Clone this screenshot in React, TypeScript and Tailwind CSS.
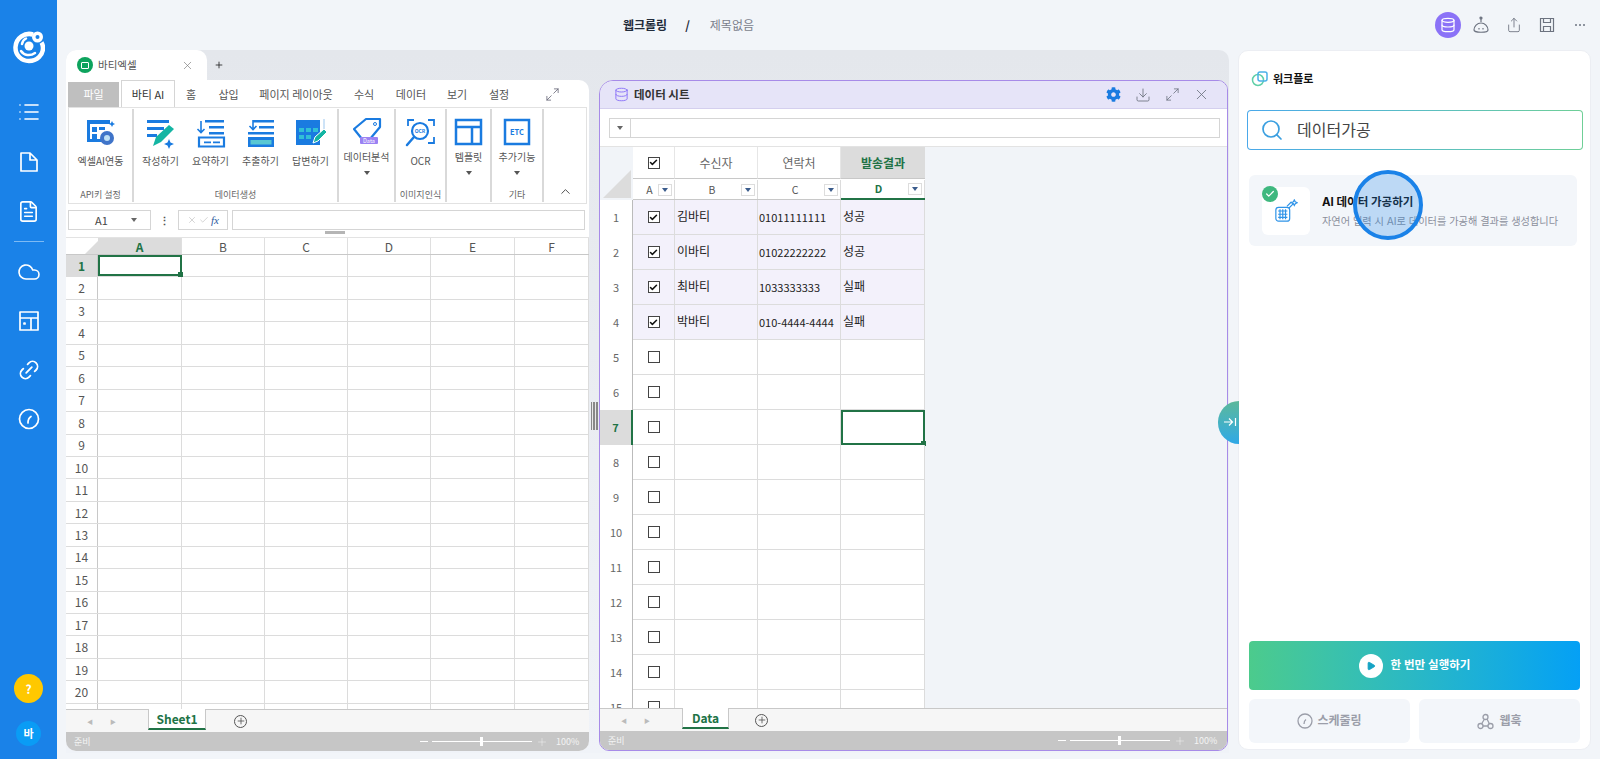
import { Check, ChevronUp, Cloud, Database, Download, FileText, Link2, List, Maximize2, Play, Plus, Search, Share, X } from 'lucide-react';
import { FaCog } from 'react-icons/fa';

const FONT = "font-['Noto_Sans_CJK_KR','Noto_Sans',sans-serif]";
const EXCEL_COLS = ['A', 'B', 'C', 'D', 'E', 'F'];
const EXCEL_W = ['w-[84px]', 'w-[83px]', 'w-[83px]', 'w-[83px]', 'w-[84px]', 'flex-1'];
const EXCEL_ROWS = Array.from({ length: 21 }, (_, i) => i + 1);
const DATA_ROWS = Array.from({ length: 15 }, (_, i) => i + 1);
const PEOPLE = [
  ['김바티', '01011111111', '성공'],
  ['이바티', '01022222222', '성공'],
  ['최바티', '1033333333', '실패'],
  ['박바티', '010-4444-4444', '실패'],
];
const TABS = [
  ['홈', 'w-[32px]'],
  ['삽입', 'w-[43px]'],
  ['페이지 레이아웃', 'w-[92px]'],
  ['수식', 'w-[44px]'],
  ['데이터', 'w-[50px]'],
  ['보기', 'w-[42px]'],
  ['설정', 'w-[42px]'],
];

const Logo = () => (
  <svg width="32" height="34" viewBox="0 0 32 34" fill="none">
    <path d="M20 4.500C12 2 3 8 2.500 17c-.4 8 6 14 13.500 14 8 0 14-6 14-13 0-2-.5-4-1.500-5.500" stroke="#fff" strokeWidth="4.500" />
    <circle cx="24.500" cy="7" r="5.500" fill="#fff" />
    <circle cx="24.500" cy="7" r="2" fill="#1a82e8" />
    <circle cx="16" cy="16" r="4.500" fill="#fff" />
    <path d="M8 21c3 4.500 9 5.500 14 2" stroke="#fff" strokeWidth="2.500" strokeLinecap="round" />
    <path d="M9 14c.5-2.500 2-4.500 4-5.500" stroke="#fff" strokeWidth="2.500" strokeLinecap="round" />
  </svg>
);

const NavIcon: React.FC<{ children: React.ReactNode }> = ({ children }) => (
  <svg width="22" height="22" viewBox="0 0 22 22" fill="none" stroke="#fff" strokeWidth="1.700" strokeLinejoin="round" strokeLinecap="round">
    {children}
  </svg>
);

const Sidebar = () => (
  <aside className="flex w-[57px] shrink-0 flex-col items-center bg-[#1a82e8] text-white">
    <div className="mt-[30px] flex h-[34px] items-center">
      <Logo />
    </div>
    <div className="mt-[37px] flex h-[22px] items-center">
      <List size={24} strokeWidth={1.600} />
    </div>
    <div className="mt-[28px] flex h-[22px] items-center">
      <NavIcon>
        <path d="M3 2h9l7 7v11H3z M12 2v7h7" />
      </NavIcon>
    </div>
    <div className="mt-[27px] flex h-[22px] items-center">
      <FileText size={23} strokeWidth={1.700} />
    </div>
    <div className="mt-[19px] h-px w-[30px] bg-[#7dbaf4]" />
    <div className="mt-[19px] flex h-[22px] items-center">
      <Cloud size={24} strokeWidth={1.600} />
    </div>
    <div className="mt-[27px] flex h-[22px] items-center">
      <NavIcon>
        <path d="M2 2h18v18H2z M2 8h18 M13 8v12" />
        <path d="M6 13h1v1H6z" />
      </NavIcon>
    </div>
    <div className="mt-[27px] flex h-[22px] items-center">
      <Link2 size={24} strokeWidth={1.800} className="-rotate-45" />
    </div>
    <div className="mt-[27px] flex h-[22px] items-center">
      <NavIcon>
        <circle cx="11" cy="11" r="9.500" />
        <path d="M10 15c0-3 .5-5 3-6.500" />
      </NavIcon>
    </div>
    <div className="mt-auto flex h-[29px] w-[29px] items-center justify-center rounded-full bg-[#ffc800] text-[12px] font-bold">?</div>
    <div className="mb-[13px] mt-[18px] flex h-[25px] w-[25px] items-center justify-center rounded-full bg-[#0a9cf5] text-[11px] font-bold">바</div>
  </aside>
);

const TopBar = () => (
  <header className="relative flex h-[50px] items-center pl-[566px] text-[12px]">
    <span className="font-bold text-[#222b3a]">웹크롤링</span>
    <span className="ml-[18px] font-bold text-[#222b3a]">/</span>
    <span className="ml-[20px] text-[#7b7f8c]">제목없음</span>
    <div className="ml-auto mr-[7px] flex items-center">
      <div className="flex h-[26px] w-[26px] items-center justify-center rounded-full bg-[#8b72f7]">
        <Database size={16} color="#fff" strokeWidth={1.800} />
      </div>
      <div className="flex w-[40px] justify-center">
        <svg width="18" height="20" viewBox="0 0 18 20" fill="none" stroke="#6d7380" strokeWidth="1.200">
          <circle cx="9" cy="3" r="1" fill="#6d7380" />
          <path d="M9 4v3" />
          <path d="M2 15a7 7 0 0 1 14 0c0 3-14 3-14 0z" />
          <path d="M7 13v1.500M11 13v1.500" />
        </svg>
      </div>
      <div className="flex w-[26px] justify-center">
        <Share size={16} color="#6d7380" strokeWidth={1.300} />
      </div>
      <div className="flex w-[40px] justify-center">
        <svg width="16" height="16" viewBox="0 0 16 16" fill="none" stroke="#6d7380" strokeWidth="1.200">
          <path d="M1.500 1.500h13v13h-13z" />
          <path d="M4.500 1.500v4h7v-4M4.500 14.500v-5h7v5" />
        </svg>
      </div>
      <div className="flex w-[26px] justify-center gap-[2px]">
        <span className="h-[2px] w-[2px] rounded-full bg-[#6d7380]" />
        <span className="h-[2px] w-[2px] rounded-full bg-[#6d7380]" />
        <span className="h-[2px] w-[2px] rounded-full bg-[#6d7380]" />
      </div>
    </div>
  </header>
);

const RibbonIcon: React.FC<{ kind: string }> = ({ kind }) => {
  const blue = '#1a7be0';
  if (kind === 'link')
    return (
      <svg width="32" height="32" viewBox="0 0 32 32" fill="none">
        <path d="M2 3h23v4H2zM2 7h3v18H2zM7 10h5v5H7zM7 17h5v5H7z M14 10h6v3h-6z" fill={blue} />
        <path d="M5 22h13v3H5z" fill={blue} />
        <circle cx="22" cy="21" r="7" fill="#3f74c9" />
        <circle cx="22" cy="21" r="3" fill="#bfe0f5" />
        <path d="M27 4l1 2 2 1-2 1-1 2-1-2-2-1 2-1z" fill={blue} />
      </svg>
    );
  if (kind === 'write')
    return (
      <svg width="32" height="32" viewBox="0 0 32 32" fill="none">
        <path d="M2 3h22v3H2zM2 10h17v3H2zM2 17h10v3H2z" fill={blue} />
        <path d="M8 29l3-9L24 8l5 4-13 13z" fill="#14b5a3" />
        <path d="M24 22l1.500 3.500L29 27l-3.500 1.500L24 32l-1.500-3.500L19 27l3.500-1.500z" fill={blue} />
      </svg>
    );
  if (kind === 'sum')
    return (
      <svg width="32" height="32" viewBox="0 0 32 32" fill="none">
        <path d="M10 3h19v2.500H10zM14 9h15v2.500H14zM14 15h15v2.500H14z" fill={blue} />
        <path d="M6 4v11M2.500 12L6 15.500 9.500 12" stroke={blue} strokeWidth="1.600" />
        <path d="M4 20.500h25v9H4z" stroke={blue} strokeWidth="2.200" />
        <path d="M9 24.500h7v1.800H9zM18 24.500h7v1.800h-7z" fill={blue} />
      </svg>
    );
  if (kind === 'extract')
    return (
      <svg width="32" height="32" viewBox="0 0 32 32" fill="none">
        <path d="M8 3h21v2.500H8zM14 9h15v2.500H14zM3 15h26v2.500H3z" fill={blue} />
        <path d="M8 3v9M4.500 9L8 12.500 11.500 9" stroke={blue} strokeWidth="1.600" />
        <path d="M3 20h26v10H3z" fill={blue} />
        <path d="M5.500 23h21v4.500h-21z" fill="#58c7d3" />
      </svg>
    );
  if (kind === 'answer')
    return (
      <svg width="32" height="32" viewBox="0 0 32 32" fill="none">
        <path d="M1 3h24v5H1zM1 8h24v20H1z" fill={blue} />
        <path d="M4 11h5v4H4zM11 11h5v4h-5zM18 11h5v4h-5zM4 18h5v4H4zM11 18h5v4h-5z" fill="#31c0d6" />
        <path d="M29 2v14" stroke="#9cc7ef" />
        <path d="M18 26l2-6 9-8 3 3-9 9z" fill="#14b5a3" stroke="#fff" />
      </svg>
    );
  if (kind === 'tag')
    return (
      <svg width="32" height="32" viewBox="0 0 32 32" fill="none">
        <path d="M3 12L15 2h14v8L19 22H11z" stroke={blue} strokeWidth="2.200" strokeLinejoin="round" />
        <circle cx="24" cy="7" r="1.500" stroke={blue} />
        <rect x="9" y="20" width="18" height="7" rx="1" fill="#9b82f3" />
        <text x="18" y="26" fontSize="5.500" fill="#fff" textAnchor="middle">Data</text>
      </svg>
    );
  if (kind === 'ocr')
    return (
      <svg width="32" height="32" viewBox="0 0 32 32" fill="none" stroke={blue}>
        <path d="M3 9V3h6M23 3h6v6M29 20v6h-6" strokeWidth="1.800" />
        <circle cx="15" cy="14" r="8" strokeWidth="2.200" />
        <path d="M9 20l-7 8" strokeWidth="2.500" strokeLinecap="round" />
        <text x="15" y="16" fontSize="5" fill={blue} stroke="none" fontWeight="700" textAnchor="middle">OCR</text>
      </svg>
    );
  if (kind === 'layout')
    return (
      <svg width="32" height="32" viewBox="0 0 32 32" fill="none" stroke={blue} strokeWidth="2.500">
        <path d="M3 3h25v24H3zM3 10h25M19 10v17" />
      </svg>
    );
  return (
    <svg width="32" height="32" viewBox="0 0 32 32" fill="none" stroke={blue} strokeWidth="2.500">
      <path d="M4 3h24v24H4z" />
      <text x="16" y="18" fontSize="7.500" fontWeight="700" fill={blue} stroke="none" textAnchor="middle">ETC</text>
    </svg>
  );
};

const RibbonItem: React.FC<{ kind: string; label: string; arrow?: boolean; w?: string }> = ({ kind, label, arrow, w = 'w-[50px]' }) => (
  <div className={`flex ${w} flex-col items-center pt-[8px]`}>
    <div className="flex h-[32px] items-center justify-center">
      <RibbonIcon kind={kind} />
    </div>
    <div className={`whitespace-nowrap text-[10px] leading-[14px] text-[#555] ${arrow ? 'mt-[1px]' : 'mt-[5px]'}`}>{label}</div>
    {arrow && <div className="mt-[7px] h-0 w-0 border-x-[3px] border-t-[4px] border-x-transparent border-t-[#555]" />}
  </div>
);

const RibbonGroup: React.FC<{ label?: string; w: string; children: React.ReactNode }> = ({ label, w, children }) => (
  <div className={`flex ${w} shrink-0 flex-col border-r-2 border-[#d9d9d9]`}>
    <div className="flex flex-1 justify-center">{children}</div>
    <div className="h-[14px] text-center text-[9px] leading-[14px] text-[#666]">{label}</div>
  </div>
);

const ExcelPanel = () => (
  <section className="flex min-h-0 w-[523px] shrink-0 flex-col overflow-hidden rounded-b-[10px] rounded-tr-[10px] bg-white">
    <div className="flex h-[27px] shrink-0 items-end pl-[2px] text-[11px] text-[#555]">
      <div className="flex h-[25px] w-[51px] items-center justify-center bg-[#bfbfbf] text-white">파일</div>
      <div className="ml-[2px] flex h-[27px] w-[54px] items-center justify-center border-x border-t border-[#d5d5d5] text-[#333]">바티 AI</div>
      {TABS.map(([t, w]) => (
        <div key={t} className={`flex h-[25px] ${w} items-center justify-center`}>
          {t}
        </div>
      ))}
      <div className="ml-[25px] flex h-[25px] items-center text-[#667]">
        <Maximize2 size={15} strokeWidth={1.300} />
      </div>
    </div>
    <div className="mx-[2px] flex h-[97px] shrink-0 border border-[#e2e2e2] py-[1px]">
      <RibbonGroup w="w-[65px]" label="API키 설정">
        <RibbonItem kind="link" label="엑셀AI연동" w="w-[64px]" />
      </RibbonGroup>
      <RibbonGroup w="w-[205px]" label="데이터생성">
        <RibbonItem kind="write" label="작성하기" />
        <RibbonItem kind="sum" label="요약하기" />
        <RibbonItem kind="extract" label="추출하기" />
        <RibbonItem kind="answer" label="답변하기" />
      </RibbonGroup>
      <RibbonGroup w="w-[57px]">
        <RibbonItem kind="tag" label="데이터분석" arrow />
      </RibbonGroup>
      <RibbonGroup w="w-[51px]" label="이미지인식">
        <RibbonItem kind="ocr" label="OCR" />
      </RibbonGroup>
      <RibbonGroup w="w-[45px]">
        <RibbonItem kind="layout" label="템플릿" arrow />
      </RibbonGroup>
      <RibbonGroup w="w-[52px]" label="기타">
        <RibbonItem kind="etc" label="추가기능" arrow />
      </RibbonGroup>
      <div className="flex flex-1 items-end justify-center pb-[3px] text-[#444]">
        <ChevronUp size={15} strokeWidth={1.500} />
      </div>
    </div>
    <div className="flex h-[26px] shrink-0 items-start pl-[2px] pr-[4px] pt-[6px] text-[11px] text-[#444]">
      <div className="flex h-[20px] w-[83px] items-center border border-[#d5d5d5] pl-[26px]">
        A1
        <span className="ml-[23px] h-0 w-0 border-x-[3px] border-t-[4px] border-x-transparent border-t-[#666]" />
      </div>
      <div className="flex h-[20px] w-[27px] items-center justify-center font-bold leading-none text-[#555]">⋮</div>
      <div className="flex h-[20px] w-[50px] items-center justify-center gap-[2px] border border-[#d5d5d5] text-[#ccc]">
        <X size={10} />
        <Check size={10} />
        <span className="font-['Liberation_Serif',serif] italic text-[#2c5a9e]">fx</span>
      </div>
      <div className="ml-[4px] h-[20px] flex-1 border border-[#d5d5d5]" />
    </div>
    <div className="flex h-[7px] shrink-0 justify-center pt-[1px]">
      <div className="ml-[14px] h-[3px] w-[20px] bg-[#b5b5b5]" />
    </div>
    <div className="min-h-0 flex-1 overflow-hidden border-t border-[#e3e3e3]">
      <div className="flex h-[17px] border-b border-[#c8c8c8] text-[12px] leading-[17px] text-[#555]">
        <div className="flex w-[32px] items-end justify-end">
          <div className="h-0 w-0 border-b-[13px] border-l-[13px] border-b-[#dcdcdc] border-l-transparent" />
        </div>
        {EXCEL_COLS.map((c, i) => (
          <div key={c} className={`${EXCEL_W[i]} border-r border-[#dfdfdf] text-center ${i === 0 ? 'bg-[#dcdcdc] font-bold text-[#217346]' : ''}`}>
            {c}
          </div>
        ))}
      </div>
      {EXCEL_ROWS.map((r) => (
        <div key={r} className="flex h-[22.450px] border-b border-[#dcdcdc] text-[12px]">
          <div className={`flex w-[32px] items-center justify-center border-r border-[#c8c8c8] ${r === 1 ? 'bg-[#dcdcdc] font-bold text-[#217346]' : 'text-[#555]'}`}>{r < 21 ? r : ''}</div>
          {EXCEL_COLS.map((c, i) => {
            const sel = r === 1 && i === 0;
            return (
              <div key={c} className={`relative ${EXCEL_W[i]} ${sel ? 'border-2 border-[#217346]' : 'border-r border-[#dcdcdc]'}`}>
                {sel && <span className="absolute -bottom-[3px] -right-[3px] h-[5px] w-[5px] bg-[#217346]" />}
              </div>
            );
          })}
        </div>
      ))}
    </div>
    <SheetTabs name="Sheet1" tab="ml-[32px] w-[58px]" plus="ml-[28px]" />
    <StatusBar gap="ml-[326px]" />
  </section>
);

const SheetTabs: React.FC<{ name: string; tab: string; plus: string }> = ({ name, tab, plus }) => (
  <div className="flex h-[23px] shrink-0 border-t border-[#c8c8c8] bg-[#f6f6f6]">
    <div className="ml-[21px] flex h-[22px] items-center gap-[17px] text-[6px] text-[#bbb]">
      <span>◀</span>
      <span>▶</span>
    </div>
    <div className={`${tab} -mt-px flex h-[21px] items-center justify-center border-x border-[#c8c8c8] border-b-2 border-b-[#217346] bg-white text-[12px] font-bold text-[#217346]`}>{name}</div>
    <div className={`${plus} flex h-[22px] items-center`}>
      <div className="flex h-[13px] w-[13px] items-center justify-center rounded-full border border-[#555]">
        <Plus size={10} color="#555" strokeWidth={2} />
      </div>
    </div>
  </div>
);

const StatusBar: React.FC<{ gap: string }> = ({ gap }) => (
  <div className="flex h-[19px] shrink-0 items-center bg-[#c6c6c6] pl-[8px] text-[9px] text-white/80">
    <span className="w-[20px]">준비</span>
    <span className={`${gap} h-px w-[8px] bg-white`} />
    <div className="relative ml-[4px] h-px w-[100px] bg-white">
      <span className="absolute left-[48px] top-[-4px] h-[9px] w-[3px] bg-white" />
    </div>
    <Plus size={12} className="ml-[4px]" strokeWidth={1} />
    <span className="ml-[8px]">100%</span>
  </div>
);

const Checkbox: React.FC<{ on?: boolean }> = ({ on }) => (
  <span className="flex h-[12px] w-[12px] items-center justify-center border-[1.500px] border-[#444] bg-white">
    {on && <Check size={9} color="#111" strokeWidth={4} />}
  </span>
);

const LetterCell: React.FC<{ c: string; w: string; active?: boolean }> = ({ c, w, active }) => (
  <div className={`flex ${w} items-center border-r border-[#dcdcdc] pl-[8px] pr-[2px] text-[10.500px] ${active ? 'font-bold text-[#217346]' : 'text-[#555]'}`}>
    <span className="flex-1 text-center">{c}</span>
    <span className="flex h-[12px] w-[14px] items-center justify-center border border-[#ddd] bg-white">
      <span className="h-0 w-0 border-x-[3px] border-t-[4px] border-x-transparent border-t-[#3b5c8c]" />
    </span>
  </div>
);

const DataGrid = () => (
  <div className="min-h-0 flex-1 overflow-hidden">
    <div className="flex h-[32px]">
      <div className="w-[33px] bg-transparent" />
      <div className="flex w-[42px] items-center justify-center border-b border-r border-[#c8c8c8] border-r-[#e6e6e6] bg-white">
        <Checkbox on />
      </div>
      {['수신자', '연락처'].map((t) => (
        <div key={t} className="flex w-[83px] items-center justify-center border-b border-r border-[#c8c8c8] border-r-[#e6e6e6] bg-white text-[12px] text-[#666]">
          {t}
        </div>
      ))}
      <div className="flex w-[84px] items-center justify-center border-b border-[#c8c8c8] bg-[#dcdcdc] text-[12px] font-bold text-[#217346]">발송결과</div>
    </div>
    <div className="flex h-[21px]">
      <div className="flex w-[33px] items-end justify-end pb-[2px] pr-[2px]">
        <div className="-mt-[20px] h-0 w-0 border-b-[28px] border-l-[28px] border-t-0 border-b-[#dcdcdc] border-l-transparent" />
      </div>
      <div className="flex border-b border-[#c8c8c8] bg-white pt-[1px]">
        <LetterCell c="A" w="w-[42px]" />
        <LetterCell c="B" w="w-[83px]" />
        <LetterCell c="C" w="w-[83px]" />
      </div>
      <div className="flex border-b-2 border-[#217346] bg-white pt-[1px]">
        <LetterCell c="D" w="w-[84px]" active />
      </div>
    </div>
    {DATA_ROWS.map((r) => {
      const p = PEOPLE[r - 1];
      const selected = r === 7;
      const bg = p ? 'bg-[#f3f1fb]' : 'bg-white';
      return (
        <div key={r} className="flex h-[35px]">
          <div className={`flex w-[33px] items-center justify-center text-[11px] ${selected ? 'border-r-2 border-[#217346] bg-[#dcdcdc] font-bold text-[#217346]' : 'border-r border-[#bbb] bg-white text-[#666]'}`}>{r}</div>
          <div className={`flex w-[42px] items-center justify-center border-b border-r border-[#dcdcdc] ${bg}`}>
            <Checkbox on={!!p} />
          </div>
          <div className={`flex w-[83px] items-center border-b border-r border-[#dcdcdc] pb-[2px] pl-[2px] text-[12px] text-[#222] ${bg}`}>{p?.[0]}</div>
          <div className={`flex w-[83px] items-center border-b border-r border-[#dcdcdc] pl-[1px] pt-[1px] text-[11px] text-[#222] ${bg}`}>{p?.[1]}</div>
          <div className={`relative flex w-[84px] items-center pb-[2px] pl-[2px] text-[12px] text-[#222] ${bg} ${selected ? 'border-2 border-[#217346]' : 'border-b border-r border-[#dcdcdc]'}`}>
            {p?.[2]}
            {selected && <span className="absolute -bottom-[3px] -right-[3px] h-[5px] w-[5px] bg-[#217346]" />}
          </div>
        </div>
      );
    })}
  </div>
);

const DataPanel = () => (
  <section className="flex min-h-0 w-[629px] shrink-0 flex-col overflow-hidden rounded-[10px] rounded-tl-[14px] border border-[#a78be8] bg-[#f1f4f8]">
    <div className="flex h-[28px] shrink-0 items-center border-b border-[#d4cfee] bg-[#e6e4f8] pl-[14px] pr-[17px] text-[#333]">
      <Database size={15} color="#8b72f7" strokeWidth={1.500} />
      <span className="ml-[5px] text-[11.500px] font-bold">데이터 시트</span>
      <FaCog size={15} color="#1a7be0" className="ml-auto" />
      <Download size={16} color="#6d7380" strokeWidth={1.300} className="ml-[14px]" />
      <Maximize2 size={15} color="#6d7380" strokeWidth={1.300} className="ml-[14px]" />
      <X size={17} color="#6d7380" strokeWidth={1.200} className="ml-[13px]" />
    </div>
    <div className="flex h-[38px] shrink-0 items-center border-b border-[#e3e3e3] bg-white pl-[9px] pr-[7px]">
      <div className="flex h-[20px] w-[22px] items-center justify-center border border-[#d5d5d5]">
        <span className="h-0 w-0 border-x-[3px] border-t-[4px] border-x-transparent border-t-[#666]" />
      </div>
      <div className="h-[20px] flex-1 border border-l-0 border-[#d5d5d5]" />
    </div>
    <DataGrid />
    <SheetTabs name="Data" tab="ml-[32px] w-[47px]" plus="ml-[26px]" />
    <StatusBar gap="ml-[430px]" />
  </section>
);

const Workspace = () => (
  <div className="ml-[9px] flex h-[703px] w-[1163px] shrink-0 flex-col rounded-t-[10px] bg-gradient-to-b from-[#e4e7ec] to-[#f0f3f8]">
    <div className="flex h-[30px] shrink-0 items-center">
      <div className="flex h-[30px] w-[141px] items-center rounded-t-[10px] bg-white pl-[11px] pr-[13px] text-[10.500px] text-[#555]">
        <span className="flex h-[16px] w-[16px] items-center justify-center rounded-full bg-[#0da35d]">
          <span className="h-[7px] w-[8px] rounded-[1px] border border-white" />
        </span>
        <span className="ml-[5px]">바티엑셀</span>
        <X size={13} strokeWidth={1.200} className="ml-auto text-[#777]" />
      </div>
      <Plus size={10} strokeWidth={2} className="ml-[7px] text-[#222]" />
    </div>
    <div className="flex min-h-0 flex-1 pb-[2px]">
      <ExcelPanel />
      <div className="flex w-[10px] shrink-0 items-center justify-center">
        <div className="flex h-[28px] w-[7px] justify-between bg-[#e8e8e8]">
          <span className="w-[1.500px] bg-[#888]" />
          <span className="w-[1.500px] bg-[#888]" />
          <span className="w-[1.500px] bg-[#888]" />
        </div>
      </div>
      <DataPanel />
    </div>
  </div>
);

const WorkflowPanel = () => (
  <aside className="relative ml-[9px] flex h-[700px] w-[353px] shrink-0 flex-col rounded-[10px] border border-[#eceef3] bg-white font-['Inter','Noto_Sans_CJK_KR',sans-serif]">
    <div className="mt-[18px] flex h-[20px] items-center pl-[12px] text-[11px] font-bold text-[#111]">
      <svg width="18" height="18" viewBox="0 0 18 18" fill="none" strokeWidth="1.500">
        <circle cx="7" cy="10" r="5.500" stroke="#5fcfa8" />
        <rect x="7" y="2" width="9" height="9" rx="2" stroke="#4bb1e8" />
      </svg>
      <span className="ml-[4px]">워크플로</span>
    </div>
    <div className="ml-[8px] mt-[21px] w-[336px] rounded-[4px] bg-gradient-to-r from-[#4aa8ea] to-[#6fcf97] p-px">
      <div className="flex h-[38px] items-center rounded-[3px] bg-white pl-[12px] text-[16px] text-[#444]">
        <Search size={24} color="#3a9fe0" strokeWidth={1.700} />
        <span className="ml-[13px]">데이터가공</span>
      </div>
    </div>
    <div className="ml-[10px] mt-[25px] flex h-[71px] w-[328px] items-center rounded-[6px] bg-[#f3f6fa] pl-[13px]">
      <div className="relative flex h-[48px] w-[48px] items-center justify-center rounded-[6px] bg-white">
        <svg width="24" height="24" viewBox="0 0 26 26" fill="none" stroke="#2f94e8" strokeWidth="1.300">
          <rect x="2" y="9" width="15" height="15" rx="3" />
          <path d="M4.500 13h10M4.500 16.500h10M4.500 20h10M6.500 11v11M9.500 11v11M12.500 11v11" />
          <path d="M14 8l5-5M16 10l5-5" />
          <path d="M22 1l1 2 2 1-2 1-1 2-1-2-2-1 2-1z" />
        </svg>
        <span className="absolute left-0 top-[-1px] flex h-[16px] w-[16px] items-center justify-center rounded-full bg-[#3fb87f]">
          <Check size={10} color="#fff" strokeWidth={3} />
        </span>
      </div>
      <div className="ml-[12px]">
        <div className="text-[11.500px] font-bold leading-[16px] text-[#111]">AI 데이터 가공하기</div>
        <div className="mt-[4px] whitespace-nowrap text-[10.200px] leading-[14px] text-[#8b8f9c]">자연어 입력 시 AI로 데이터를 가공해 결과를 생성합니다</div>
      </div>
    </div>
    <div className="ml-[10px] mt-auto flex h-[49px] w-[331px] items-center justify-center rounded-[4px] bg-gradient-to-r from-[#4ccb8c] to-[#05a0f5] text-[11.500px] font-semibold text-white">
      <span className="flex h-[24px] w-[24px] items-center justify-center rounded-full bg-white">
        <Play size={10} fill="#16a3c4" color="#16a3c4" />
      </span>
      <span className="ml-[8px]">한 번만 실행하기</span>
    </div>
    <div className="mb-[6px] ml-[10px] mt-[9px] flex w-[331px] gap-[9px] text-[12px] font-bold text-[#9b9ea9]">
      <div className="flex h-[44px] flex-1 items-center justify-center gap-[4px] rounded-[6px] bg-[#f3f6fa]">
        <svg width="16" height="16" viewBox="0 0 16 16" fill="none" stroke="#9b9ea9" strokeWidth="1.300">
          <circle cx="8" cy="8" r="7" />
          <path d="M7 11c0-2 .5-3.500 2-4.500" />
        </svg>
        스케줄링
      </div>
      <div className="flex h-[44px] flex-1 items-center justify-center gap-[5px] rounded-[6px] bg-[#f3f6fa]">
        <svg width="17" height="17" viewBox="0 0 17 17" fill="none" stroke="#9b9ea9" strokeWidth="1.300">
          <circle cx="8.500" cy="4" r="2.500" />
          <circle cx="3.500" cy="13" r="2.500" />
          <circle cx="13.500" cy="13" r="2.500" />
          <path d="M7.500 6L4.500 11M10 6l2.500 5M6 13h5" />
        </svg>
        웹훅
      </div>
    </div>
    <div className="absolute left-[-21px] top-[350px] h-[43px] w-[21px] rounded-l-full bg-gradient-to-b from-[#5bb89a] to-[#2fa8e6] pl-[5px] pt-[14px]">
      <svg width="14" height="14" viewBox="0 0 14 14" fill="none" stroke="#fff" strokeWidth="1.200">
        <path d="M1 7h8M6 3.500L9.500 7 6 10.500M12.500 3v8" />
      </svg>
    </div>
    <div className="absolute left-[114px] top-[119px] h-[70px] w-[70px] rounded-full border-[4px] border-[#1a82e8] bg-[#1a82e8]/25" />
  </aside>
);

const App = () => {
  return (
    <div className={`flex h-[759px] w-[1600px] overflow-hidden bg-[#f2f5f9] ${FONT}`}>
      <Sidebar />
      <main className="flex min-w-0 flex-1 flex-col">
        <TopBar />
        <div className="flex">
          <Workspace />
          <WorkflowPanel />
        </div>
      </main>
    </div>
  );
};

export default App;
